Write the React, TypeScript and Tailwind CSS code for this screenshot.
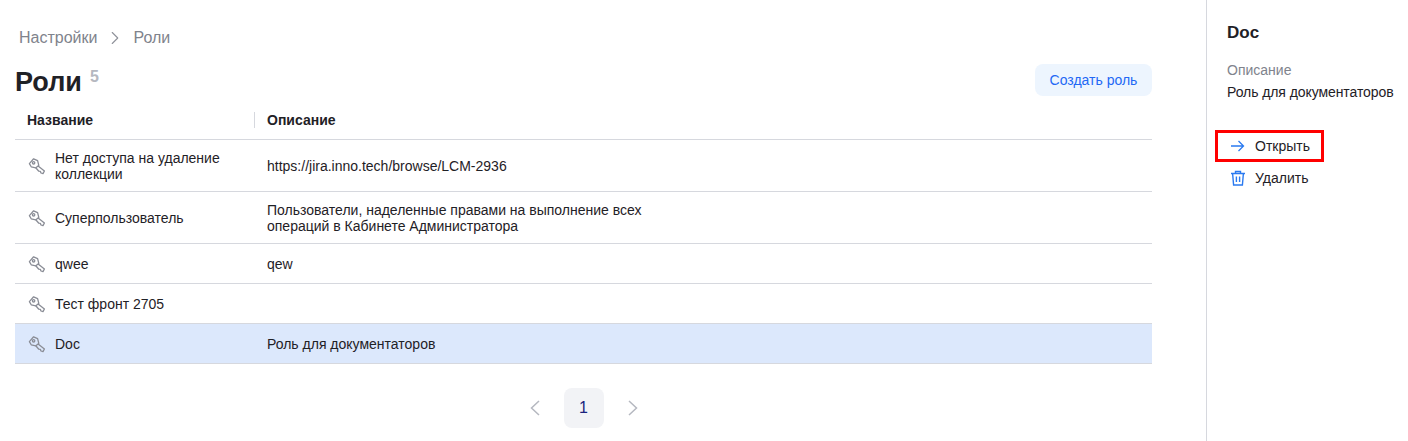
import { ChevronRight } from 'lucide-react';

const roles = [
  { name: 'Нет доступа на удаление коллекции', desc: 'https://jira.inno.tech/browse/LCM-2936', h: 'h-[52px]' },
  { name: 'Суперпользователь', desc: 'Пользователи, наделенные правами на выполнение всех операций в Кабинете Администратора', h: 'h-[52px]' },
  { name: 'qwee', desc: 'qew', h: 'h-[40px]' },
  { name: 'Тест фронт 2705', desc: '', h: 'h-[40px]' },
  { name: 'Doc', desc: 'Роль для документаторов', h: 'h-[40px]', active: true },
];

function KeyIcon() {
  return (
    <svg width="18" height="18" viewBox="0 0 18 18" fill="none" stroke="#8a8d96" strokeWidth="1.3" strokeLinejoin="round" className="shrink-0">
      <path d="M1.4 6.6 5.6 1.8 9.6 3.6 10.8 8.4 7.8 10.8 3.2 9.8Z" />
      <path d="M9.8 8.8 16.4 14 15 16.6 13 16 12.4 14.4 10.8 14.2 7.8 10.8" />
      <circle cx="5.6" cy="5.8" r="1.2" />
    </svg>
  );
}

function PageArrow({ d }: { d: string }) {
  return (
    <svg width="24" height="24" viewBox="0 0 24 24" fill="none" stroke="#b5b8c0" strokeWidth="1.5" className="mx-[8px]">
      <path d={d} />
    </svg>
  );
}

function OpenIcon() {
  return (
    <svg width="18" height="18" viewBox="0 0 18 18" fill="none" stroke="#2a7af0" strokeWidth="1.3">
      <path d="M2 9h12M9.5 4l5 5-5 5" />
    </svg>
  );
}

function TrashIcon() {
  return (
    <svg width="18" height="18" viewBox="0 0 18 18" fill="none" stroke="#2a7af0" strokeWidth="1.4">
      <path d="M2 4.5h14M6.5 4.5V2.5h5v2M3.6 4.5l1 11.5h8.8l1-11.5M7.4 7.5v5.5M10.6 7.5v5.5" />
    </svg>
  );
}

export default function App() {
  return (
    <div className="flex h-[441px] w-[1408px] overflow-hidden bg-white font-['Liberation_Sans',sans-serif] text-[14px] text-[#1f2126]">
      <main className="w-[1206px] shrink-0 pr-[54px] pl-[15px]">
        <div className="mt-[28px] flex h-[20px] items-center pl-[4px] text-[16px] text-[#80838c]">
          <span>Настройки</span>
          <ChevronRight className="mx-[7px] size-[22px] text-[#8f929a]" strokeWidth={1.2} />
          <span>Роли</span>
        </div>
        <div className="mt-[16px] flex h-[36px] items-start justify-between">
          <h1 className="flex items-start text-[27px] leading-[36px] font-bold">
            Роли
            <sup className="static mt-[3px] ml-[8px] text-[16px] leading-[20px] font-bold text-[#b5b8c0]">5</sup>
          </h1>
          <button className="h-[32px] w-[117px] rounded-lg bg-[#edf5fe] text-[14px] text-[#2268f5]">Создать роль</button>
        </div>
        <div className="flex h-[40px] items-center border-b border-[#d6d8de] pt-[1px] font-bold">
          <div className="w-[239px] pl-[12px]">Название</div>
          <div className="h-[16px] w-px bg-[#d6d8de]" />
          <div className="pl-[12px]">Описание</div>
        </div>
        {roles.map((role) => (
          <div key={role.name} className={`flex items-center border-b border-[#d6d8de] leading-[16px] ${role.h} ${role.active ? 'bg-[#dce8fc]' : ''}`}>
            <div className="flex w-[240px] items-center gap-[9px] pr-[16px] pl-[13px]">
              <KeyIcon />
              <span>{role.name}</span>
            </div>
            <div className="w-[400px] pl-[12px]">{role.desc}</div>
          </div>
        ))}
        <div className="mt-[24px] flex items-center justify-center gap-[9px]">
          <PageArrow d="M16 5 8.5 12 16 19" />
          <div className="flex size-[40px] items-center justify-center rounded-lg bg-[#f2f3f6] text-[16px] text-[#1a237e]">1</div>
          <PageArrow d="M8 5 15.5 12 8 19" />
        </div>
      </main>
      <aside className="flex-1 border-l border-[#d6d8de] pt-[22px] pl-[20px]">
        <h2 className="text-[17px] leading-[22px] font-bold">Doc</h2>
        <div className="mt-[16px] leading-[20px] text-[#80838c]">Описание</div>
        <div className="mt-[2px] leading-[20px] tracking-[-0.08px]">Роль для документаторов</div>
        <div className="relative mt-[28px] -ml-[12px]">
          <div className="flex h-[32px] items-center gap-[8px] pl-[14px]">
            <OpenIcon />
            <span>Открыть</span>
          </div>
          <div className="flex h-[32px] items-center gap-[8px] pl-[14px]">
            <TrashIcon />
            <span>Удалить</span>
          </div>
          <div className="absolute top-0 left-0 h-[32px] w-[109px] border-[3px] border-[#ff0000]" />
        </div>
      </aside>
    </div>
  );
}
